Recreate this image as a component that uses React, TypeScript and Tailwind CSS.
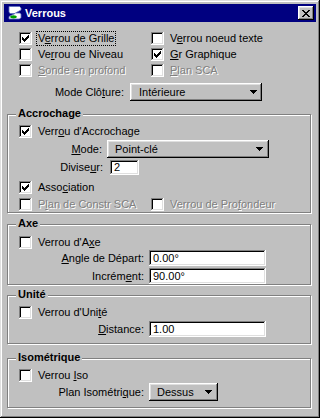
import type { ReactNode } from 'react';

const sunken = 'shadow-[inset_-1px_-1px_#fff,inset_1px_1px_#808080,inset_-2px_-2px_#dfdfdf,inset_2px_2px_#000]';
const raised = 'shadow-[inset_-1px_-1px_#000,inset_1px_1px_#fff,inset_-2px_-2px_#808080,inset_2px_2px_#dfdfdf]';

function Check({ checked }: { checked?: boolean }) {
  return (
    <span className={`block h-[13px] w-[13px] shrink-0 bg-white ${sunken}`}>
      {checked && (
        <svg width="13" height="13" viewBox="0 0 13 13" shapeRendering="crispEdges">
          <path d="M9 3h1v3H9zM8 4h1v3H8zM7 5h1v3H7zM6 6h1v3H6zM5 7h1v3H5zM4 6h1v3H4zM3 5h1v3H3z" fill="#000" />
        </svg>
      )}
    </span>
  );
}

function CheckRow({ label, checked, disabled, focus }: { label: ReactNode; checked?: boolean; disabled?: boolean; focus?: boolean }) {
  return (
    <div className="flex h-[16px] items-center">
      <Check checked={checked} />
      <span
        className={`ml-[4px] whitespace-nowrap border px-[1px] leading-[13px] ${focus ? 'border-dotted border-black' : 'border-transparent'} ${disabled ? 'text-[#808080] [text-shadow:1px_1px_0_#fff]' : ''}`}
      >
        {label}
      </span>
    </div>
  );
}

function Arrow() {
  return (
    <svg width="7" height="4" viewBox="0 0 7 4" shapeRendering="crispEdges">
      <path d="M0 0h7v1H0zM1 1h5v1H1zM2 2h3v1H2zM3 3h1v1H3z" fill="#000" />
    </svg>
  );
}

function Group({ title, className, children }: { title: string; className: string; children: ReactNode }) {
  return (
    <div className={`relative ml-[3px] w-[304px] border border-[#808080] shadow-[inset_1px_1px_#fff,1px_1px_#fff] ${className}`}>
      <div className="absolute -top-2 left-0 flex w-full pl-[8px]">
        <span className="bg-[#c0c0c0] px-[2px] font-bold leading-[13px]">{title}</span>
      </div>
      {children}
    </div>
  );
}

function TitleBar() {
  return (
    <div className="flex h-[18px] items-center bg-[#000080] pl-[3px] pr-[2px]">
      <svg width="16" height="16" viewBox="0 0 16 16">
        <path d="M2 1.5h10.5l1.5 1.5v2L8.5 8h4.5l1 1.5v3L12.5 14H2v-2.5L8 8.5H3L2 7z" fill="#fff" stroke="#6070c0" strokeWidth="0.8" />
        <ellipse cx="6.5" cy="11.8" rx="3.3" ry="1.6" fill="#00a000" />
      </svg>
      <span className="ml-[2px] flex-1 font-bold leading-[18px] text-white">Verrous</span>
      <span className={`flex h-[14px] w-[16px] items-center justify-center bg-[#c0c0c0] ${raised}`}>
        <svg width="8" height="7" viewBox="0 0 8 7" shapeRendering="crispEdges">
          <path d="M0 0h2v1H0zM6 0h2v1H6zM1 1h2v1H1zM5 1h2v1H5zM2 2h4v1H2zM3 3h2v1H3zM2 4h4v1H2zM1 5h2v1H1zM5 5h2v1H5zM0 6h2v1H0zM6 6h2v1H6z" fill="#000" />
        </svg>
      </span>
    </div>
  );
}

export default function App() {
  return (
    <div className="h-[418px] w-[320px] bg-[#c0c0c0] p-[4px] font-['Liberation_Sans',Arial,sans-serif] text-[11px] text-black shadow-[inset_-1px_-1px_#000,inset_1px_1px_#dfdfdf,inset_-2px_-2px_#808080,inset_2px_2px_#fff]">
      <TitleBar />

      {/* Options générales */}
      <div className="mt-[8px] flex">
        <div className="w-[147px] pl-[15px]">
          <CheckRow checked focus label={<>V<u>e</u>rrou de Grille</>} />
          <CheckRow label={<>Ve<u>r</u>rou de Niveau</>} />
          <CheckRow disabled label={<><u>S</u>onde en profond</>} />
        </div>
        <div>
          <CheckRow label={<>V<u>e</u>rrou noeud texte</>} />
          <CheckRow checked label={<><u>G</u>r Graphique</>} />
          <CheckRow disabled label={<><u>P</u>lan SCA</>} />
        </div>
      </div>
      <div className="mt-[5px] flex items-center">
        <span className="w-[120px] text-right">Mode Cl&ocirc;<u>t</u>ure:</span>
        <div className={`ml-[6px] flex h-[18px] w-[132px] items-center justify-between pl-[9px] pr-[5px] ${raised}`}>
          Intérieure
          <Arrow />
        </div>
      </div>

      <Group title="Accrochage" className="mt-[13px] h-[99px] pt-[8px]">
        <div className="pl-[11px]">
          <CheckRow checked label={<>Verr<u>o</u>u d'Accrochage</>} />
        </div>
        <div className="mt-[1px] flex items-center">
          <span className="w-[94px] text-right"><u>M</u>ode:</span>
          <div className={`ml-[5px] flex h-[18px] w-[162px] items-center justify-between pl-[8px] pr-[6px] ${raised}`}>
            Point-clé
            <Arrow />
          </div>
        </div>
        <div className="mt-[1px] flex items-center">
          <span className="w-[95px] text-right">Divise<u>u</u>r:</span>
          <div className={`ml-[7px] flex h-[15px] w-[29px] items-center bg-white pl-[4px] ${sunken}`}>2</div>
        </div>
        <div className="mt-[4px] pl-[11px]">
          <CheckRow checked label={<>Asso<u>c</u>iation</>} />
        </div>
        <div className="mt-[1px] flex">
          <div className="w-[143px] pl-[11px]">
            <CheckRow disabled label={<>P<u>l</u>an de Constr SCA</>} />
          </div>
          <CheckRow disabled label={<>Verrou de Pro<u>f</u>ondeur</>} />
        </div>
      </Group>

      <Group title="Axe" className="mt-[11px] h-[61px] pt-[9px]">
        <div className="pl-[11px]">
          <CheckRow label={<>Verrou d'A<u>x</u>e</>} />
        </div>
        <div className="flex items-center">
          <span className="w-[136px] text-right"><u>A</u>ngle de Départ:</span>
          <div className={`ml-[5px] flex h-[16px] w-[117px] items-center bg-white pl-[4px] ${sunken}`}>0.00°</div>
        </div>
        <div className="mt-[1px] flex items-center">
          <span className="w-[136px] text-right">Incrém<u>e</u>nt:</span>
          <div className={`ml-[5px] flex h-[16px] w-[117px] items-center bg-white pl-[4px] ${sunken}`}>90.00°</div>
        </div>
      </Group>

      <Group title="Unité" className="mt-[10px] h-[49px] pt-[8px]">
        <div className="pl-[11px]">
          <CheckRow label={<>Verrou d'Uni<u>t</u>é</>} />
        </div>
        <div className="mt-[1px] flex items-center">
          <span className="w-[136px] text-right"><u>D</u>istance:</span>
          <div className={`ml-[5px] flex h-[16px] w-[117px] items-center bg-white pl-[4px] ${sunken}`}>1.00</div>
        </div>
      </Group>

      <Group title="Isométrique" className="mt-[14px] h-[50px] pt-[8px]">
        <div className="pl-[11px]">
          <CheckRow label={<>Verrou <u>I</u>so</>} />
        </div>
        <div className="flex items-center">
          <span className="w-[136px] text-right">Plan Isométri<u>q</u>ue:</span>
          <div className={`ml-[5px] flex h-[18px] w-[69px] items-center justify-between pl-[8px] pr-[6px] ${raised}`}>
            Dessus
            <Arrow />
          </div>
        </div>
      </Group>
    </div>
  );
}
